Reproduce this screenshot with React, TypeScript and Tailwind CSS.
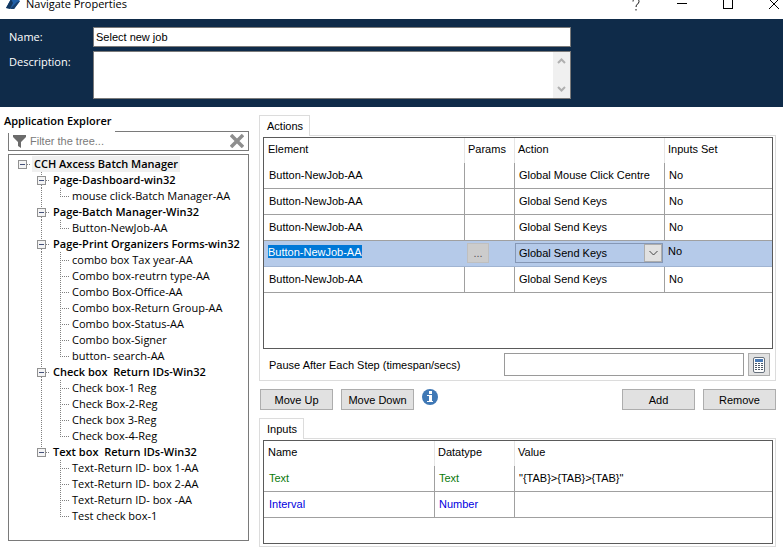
import React from "react";

const sans = "font-['Liberation_Sans',Arial,sans-serif]";
const ui = "font-['Open_Sans','Segoe_UI',sans-serif]";

type Group = { label: string; items: string[] };

const groups: Group[] = [
  { label: "Page-Dashboard-win32", items: ["mouse click-Batch Manager-AA"] },
  { label: "Page-Batch Manager-Win32", items: ["Button-NewJob-AA"] },
  {
    label: "Page-Print Organizers Forms-win32",
    items: [
      "combo box Tax year-AA",
      "Combo box-reutrn type-AA",
      "Combo Box-Office-AA",
      "Combo box-Return Group-AA",
      "Combo box-Status-AA",
      "Combo box-Signer",
      "button- search-AA",
    ],
  },
  {
    label: "Check box  Return IDs-Win32",
    items: ["Check box-1 Reg", "Check Box-2-Reg", "Check box 3-Reg", "Check box-4-Reg"],
  },
  {
    label: "Text box  Return IDs-Win32",
    items: ["Text-Return ID- box 1-AA", "Text-Return ID- box 2-AA", "Text-Return ID- box -AA", "Test check box-1"],
  },
];

function Guide({ up, down, right }: { up?: boolean; down?: boolean; right?: boolean }) {
  const line = { stroke: "#808080", strokeDasharray: "1 1" };
  return (
    <svg width="19" height="16" className="shrink-0" shapeRendering="crispEdges" aria-hidden="true">
      {up && <line x1="9.5" y1="0" x2="9.5" y2="8" {...line} />}
      {down && <line x1="9.5" y1="8" x2="9.5" y2="16" {...line} />}
      {right && <line x1="9" y1="8.5" x2="18" y2="8.5" {...line} />}
    </svg>
  );
}

function Toggle({ label, up, down }: { label: string; up?: boolean; down?: boolean }) {
  const line = { stroke: "#808080", strokeDasharray: "1 1" };
  return (
    <button type="button" aria-label={`Collapse ${label}`} className="h-4 w-[19px] shrink-0">
      <svg width="19" height="16" className="block" shapeRendering="crispEdges">
        {up && <line x1="9.5" y1="0" x2="9.5" y2="4" {...line} />}
        {down && <line x1="9.5" y1="13" x2="9.5" y2="16" {...line} />}
        <line x1="14" y1="8.5" x2="18" y2="8.5" {...line} />
        <rect x="5.5" y="4.5" width="8" height="8" fill="#f4f4f4" stroke="#919191" />
        <line x1="7" y1="8.5" x2="12" y2="8.5" stroke="#44517a" />
      </svg>
    </button>
  );
}

function Tree() {
  return (
    <ul className="text-[11px] leading-4 whitespace-pre">
      <li>
        <div className="flex h-4">
          <Toggle label="CCH Axcess Batch Manager" />
          <span className="bg-[#f0f0f0] px-0.5 font-semibold">CCH Axcess Batch Manager</span>
        </div>
        <ul>
          {groups.map((g, gi) => {
            const more = gi < groups.length - 1;
            return (
              <li key={g.label}>
                <div className="flex h-4">
                  <Guide />
                  <Toggle label={g.label} up down={more} />
                  <span className="px-0.5 font-semibold">{g.label}</span>
                </div>
                <ul>
                  {g.items.map((item, i) => (
                    <li key={item} className="flex h-4">
                      <Guide />
                      <Guide up={more} down={more} />
                      <Guide up right down={i < g.items.length - 1} />
                      <span className="px-0.5">{item}</span>
                    </li>
                  ))}
                </ul>
              </li>
            );
          })}
        </ul>
      </li>
    </ul>
  );
}

function TitleBar() {
  return (
    <header className="h-[19px] overflow-hidden bg-white">
      <div className="-mt-3 flex h-8 items-center">
        <svg width="14" height="14" viewBox="0 0 14 14" className="ml-1.5 shrink-0" aria-hidden="true">
          <path d="M0 11 L5 2 L11 1 L14 4 L8 12 Z" fill="#1f5fa8" />
          <path d="M0 11 L5 2 L7 6 L4 12 Z" fill="#12375f" />
          <path d="M4 12 L8 12 L14 4 L11 5 Z" fill="#173f6d" />
        </svg>
        <h1 className={`${ui} ml-1.5 flex-1 text-[11px] leading-4`}>Navigate Properties</h1>
        <div className="-mr-3.5 flex shrink-0">
          <button type="button" aria-label="Help" className="flex w-[46px] justify-center">
            <svg width="10" height="13" fill="none" stroke="#111">
              <path d="M2 3.5 C2 0 8 0 8 3.5 C8 6 5 6 5 9" />
              <path d="M5 11 V12.5" />
            </svg>
          </button>
          <button type="button" aria-label="Minimize" className="flex w-[46px] items-center justify-center">
            <svg width="10" height="2" shapeRendering="crispEdges">
              <path d="M0 .5H10" stroke="#000" />
            </svg>
          </button>
          <button type="button" aria-label="Maximize" className="flex w-[46px] items-center justify-center">
            <svg width="10" height="10" shapeRendering="crispEdges">
              <rect x=".5" y=".5" width="9" height="9" fill="none" stroke="#000" />
            </svg>
          </button>
          <button type="button" aria-label="Close" className="flex w-[46px] items-center justify-center">
            <svg width="10" height="10">
              <path d="M0 0L10 10M10 0L0 10" stroke="#000" />
            </svg>
          </button>
        </div>
      </div>
    </header>
  );
}

function Banner() {
  return (
    <section className={`${ui} h-[88px] bg-[#0f2b49] pt-2 pl-[9px] text-[11px] leading-4 text-white`}>
      <div className="flex items-center">
        <label htmlFor="name" className="w-[84px] shrink-0">Name:</label>
        <input
          id="name"
          defaultValue="Select new job"
          className={`${sans} h-5 max-w-[478px] min-w-0 flex-1 border border-[#7a7a7a] bg-white px-0.5 text-black outline-none`}
        />
      </div>
      <div className="mt-1 flex">
        <label htmlFor="description" className="mt-[3px] w-[84px] shrink-0">Description:</label>
        <div className="flex h-12 max-w-[478px] min-w-0 flex-1 border border-[#7a7a7a] bg-white">
          <textarea id="description" className="min-w-0 flex-1 resize-none px-0.5 text-black outline-none" />
          <div className="flex w-[17px] flex-col justify-between bg-[#f0f0f0] py-1.5">
            <button type="button" aria-label="Scroll up" className="flex justify-center">
              <svg width="9" height="6" fill="none" stroke="#b0b0b0" strokeWidth="2">
                <path d="M1 5L4.5 1.5L8 5" />
              </svg>
            </button>
            <button type="button" aria-label="Scroll down" className="flex justify-center">
              <svg width="9" height="6" fill="none" stroke="#b0b0b0" strokeWidth="2">
                <path d="M1 1L4.5 4.5L8 1" />
              </svg>
            </button>
          </div>
        </div>
      </div>
    </section>
  );
}

function Explorer() {
  return (
    <aside className={`${ui} flex w-[249px] shrink-0 flex-col`}>
      <h2 className="relative mt-1.5 -mb-0.5 ml-1 h-5 w-[111px] bg-white text-[11px] leading-4 font-semibold whitespace-nowrap">
        Application Explorer
      </h2>
      <div className="ml-2 flex h-5 items-center border border-[#7a7a7a] pr-1 pl-1">
        <svg width="13" height="13" viewBox="0 0 13 13" className="shrink-0" aria-hidden="true">
          <path d="M0 0H13V2L8 7V13L5 11V7L0 2Z" fill="#6b6b6b" />
        </svg>
        <input
          aria-label="Filter the tree"
          placeholder="Filter the tree..."
          className={`${sans} ml-1 min-w-0 flex-1 text-[11px] outline-none placeholder:text-[#7a7a7a]`}
        />
        <button type="button" aria-label="Clear filter">
          <svg width="14" height="14" viewBox="0 0 14 14" className="block">
            <path d="M1 1L13 13M13 1L1 13" stroke="#8e8e8e" strokeWidth="3.5" />
          </svg>
        </button>
      </div>
      <div className="mt-[3px] ml-2 h-[387px] border border-[#7a7a7a] pt-px pl-1">
        <Tree />
      </div>
    </aside>
  );
}

const th = "h-[25px] border-r border-[#e5e5e5] pl-[3px] pb-1 text-left font-normal first:pl-1 last:border-r-0";
const td = "h-[26px] border-r border-b border-[#a0a0a0] pb-px pl-1 first:pl-[5px] last:border-r-0";

function ActionRow({ action }: { action: string }) {
  return (
    <tr>
      <td className={td}>Button-NewJob-AA</td>
      <td className={td} />
      <td className={td}>{action}</td>
      <td className={td}>No</td>
    </tr>
  );
}

function TabPanel({ title, children }: { title: string; children: React.ReactNode }) {
  return (
    <section>
      <div className="flex" role="tablist">
        <button
          type="button"
          role="tab"
          aria-selected="true"
          className="relative -mb-px h-[21px] border border-b-0 border-[#dcdcdc] bg-white pr-1.5 pl-[7px]"
        >
          {title}
        </button>
      </div>
      <div className="border border-[#dcdcdc] pt-px pr-0.5 pl-[3px]">{children}</div>
    </section>
  );
}

function ActionsTable() {
  const sel = "h-[26px] border-b border-[#a0b4d2] bg-[#b5cae9] align-top pt-[2px]";
  return (
    <div className="h-[212px] border border-[#5a5a5a]">
      <table className="w-full table-fixed border-separate border-spacing-0">
        <colgroup>
          <col className="w-[201px]" />
          <col className="w-[50px]" />
          <col className="w-[150px]" />
          <col />
        </colgroup>
        <thead>
          <tr>
            <th className={th}>Element</th>
            <th className={th}>Params</th>
            <th className={th}>Action</th>
            <th className={th}>Inputs Set</th>
          </tr>
        </thead>
        <tbody>
          <ActionRow action="Global Mouse Click Centre" />
          <ActionRow action="Global Send Keys" />
          <ActionRow action="Global Send Keys" />
          <tr>
            <td className={`${sel} pl-1`}>
              <input
                aria-label="Element name"
                defaultValue="Button-NewJob-AA"
                className="mt-0.5 block h-[13px] w-[94px] bg-[#0078d7] leading-3 text-white outline-none"
              />
            </td>
            <td className={`${sel} pl-0.5`}>
              <button type="button" aria-label="Edit params" className="block h-5 w-[22px] border border-[#bfbfbf] bg-[#cccccc] text-[#555]">
                ...
              </button>
            </td>
            <td className={sel}>
              <div className="relative w-[148px]">
                <select aria-label="Action" className="block h-5 w-full appearance-none border border-[#8597b5] bg-[#b5cae9] pl-[3px] outline-none">
                  <option>Global Send Keys</option>
                </select>
                <span className="pointer-events-none absolute top-px right-px flex h-[18px] w-[18px] items-center justify-center border border-[#adadad] bg-[#e1e1e1]">
                  <svg width="9" height="6" fill="none" stroke="#444">
                    <path d="M.5 1L4.5 5L8.5 1" />
                  </svg>
                </span>
              </div>
            </td>
            <td className={`${sel} pl-[3px]`}>No</td>
          </tr>
          <ActionRow action="Global Send Keys" />
        </tbody>
      </table>
    </div>
  );
}

function InputsTable() {
  return (
    <div className="h-[104px] border border-[#5a5a5a]">
      <table className="w-full table-fixed border-separate border-spacing-0">
        <colgroup>
          <col className="w-[171px]" />
          <col className="w-[80px]" />
          <col />
        </colgroup>
        <thead>
          <tr>
            <th className={th}>Name</th>
            <th className={th}>Datatype</th>
            <th className={th}>Value</th>
          </tr>
        </thead>
        <tbody>
          <tr>
            <td className={`${td} text-[#0a7a0a]`}>Text</td>
            <td className={`${td} text-[#0a7a0a]`}>Text</td>
            <td className={td}>{'"{TAB}>{TAB}>{TAB}"'}</td>
          </tr>
          <tr>
            <td className={`${td} text-[#0000e0]`}>Interval</td>
            <td className={`${td} text-[#0000e0]`}>Number</td>
            <td className={td} />
          </tr>
        </tbody>
      </table>
    </div>
  );
}

function PushButton({ children }: { children: React.ReactNode }) {
  return (
    <button type="button" className="h-[21px] w-[73px] border border-[#adadad] bg-[#e1e1e1]">
      {children}
    </button>
  );
}

function Calculator() {
  const cells = [0, 1, 2, 3].flatMap((r) => [0, 1, 2].map((c) => [c, r]));
  return (
    <svg width="12" height="16" className="block">
      <rect x=".5" y=".5" width="11" height="15" rx="1.5" fill="#fff" stroke="#66707c" />
      <rect x="2" y="2" width="8" height="3" fill="#4a7ab5" />
      {cells.map(([c, r]) => (
        <rect key={`${c}-${r}`} x={2 + c * 3} y={6 + r * 2} width="2" height="1" fill="#4c5866" />
      ))}
    </svg>
  );
}

export default function App() {
  return (
    <div className="bg-white text-black">
      <TitleBar />
      <Banner />
      <div className="flex">
        <Explorer />
        <main className={`${sans} ml-2.5 min-w-0 flex-1 pt-2 pr-[7px] text-[11px] leading-4`}>
          <TabPanel title="Actions">
            <ActionsTable />
            <div className="flex h-[31px] items-center pr-[3px]">
              <label htmlFor="pause" className="w-[241px] shrink-0 pl-1.5">
                Pause After Each Step (timespan/secs)
              </label>
              <input id="pause" className="h-[23px] min-w-0 flex-1 border border-[#9a9a9a] px-1 outline-none" />
              <button
                type="button"
                aria-label="Calculator"
                className="ml-1 flex h-[23px] w-[22px] items-center justify-center border border-[#adadad] bg-[#e1e1e1]"
              >
                <Calculator />
              </button>
            </div>
          </TabPanel>
          <div className="mt-2 mb-2 flex gap-2 pl-px">
            <PushButton>Move Up</PushButton>
            <PushButton>Move Down</PushButton>
            <svg width="16" height="16" viewBox="0 0 16 16" role="img" aria-label="Information">
              <circle cx="8" cy="8" r="8" fill="#3f78b5" />
              <rect x="7" y="2" width="3" height="3" fill="#fff" />
              <path d="M5 6H10V12H11V13H5V12H7V7H5Z" fill="#fff" />
            </svg>
            <span className="flex-1" />
            <PushButton>Add</PushButton>
            <PushButton>Remove</PushButton>
          </div>
          <TabPanel title="Inputs">
            <InputsTable />
            <div className="h-0.5" />
          </TabPanel>
        </main>
      </div>
    </div>
  );
}
